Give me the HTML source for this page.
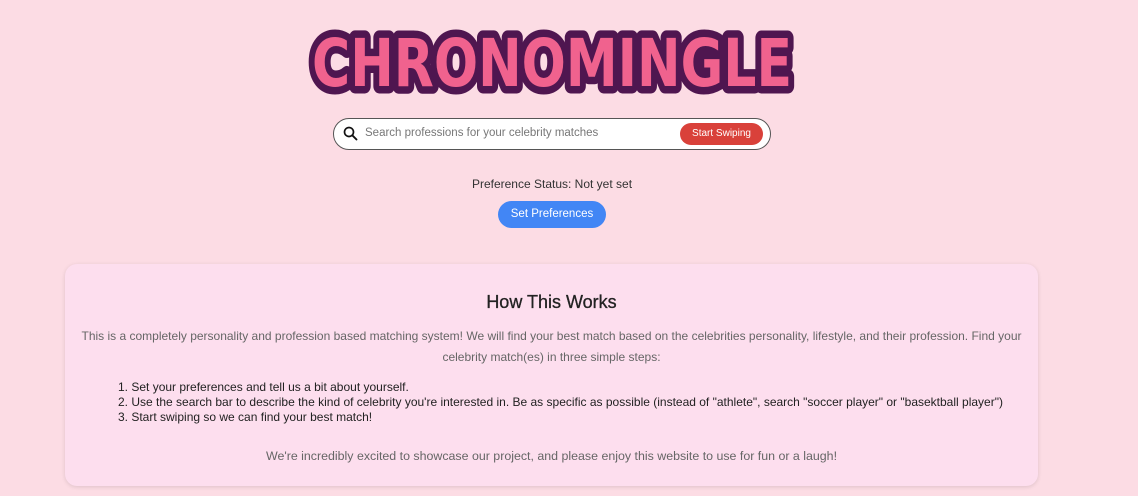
<!DOCTYPE html>
<html><head><meta charset="utf-8"><style>
body{margin:0;width:1138px;height:496px;background:#fcdce4;font-family:"Liberation Sans",sans-serif;position:relative;overflow:hidden}
.logo{position:absolute;left:295px;top:18px}
.search{position:absolute;left:333px;top:118px;width:438px;height:32px;border:1px solid #555;border-radius:17px;background:#fff;box-sizing:border-box}
.search .ph{position:absolute;left:31px;top:8px;font-size:11.5px;color:#777}
.search .btn{position:absolute;right:7px;top:4px;width:83px;height:22px;border-radius:11px;background:#d9413a;color:#fff;font-size:10px;text-align:center;line-height:22px}
.status{position:absolute;left:0;width:1104px;top:177px;text-align:center;font-size:12px;color:#333}
.pref{position:absolute;left:498px;top:201px;width:108px;height:27px;border-radius:14px;background:#4286f5;color:#fff;font-size:11.5px;text-align:center;line-height:27px}
.card{position:absolute;left:65px;top:264px;width:973px;height:222px;background:#fddeee;border-radius:12px;box-shadow:0 1px 4px rgba(0,0,0,.12)}
h2{position:absolute;top:28px;left:0;width:100%;margin:0;text-align:center;font-size:18px;font-weight:normal;color:#222;-webkit-text-stroke:.3px #222}
.p{position:absolute;top:62px;left:0;width:973px;text-align:center;font-size:12px;line-height:21px;color:#666;white-space:nowrap}
.ol{position:absolute;top:116px;left:53px;font-size:12px;line-height:15px;color:#222;white-space:nowrap}
.end{position:absolute;top:185px;left:0;width:100%;text-align:center;font-size:12.4px;color:#666}
</style></head><body>
<svg class="logo" width="515" height="82" viewBox="0 0 515 82">
<text x="257" y="68" text-anchor="middle" font-family="DejaVu Sans" font-weight="bold" font-size="66" textLength="480" lengthAdjust="spacingAndGlyphs" fill="#f0628e" stroke="#4f1650" stroke-width="15" stroke-linejoin="round" paint-order="stroke">CHRONOMINGLE</text>
</svg>
<div class="search">
<svg style="position:absolute;left:9px;top:7px" width="15" height="15" viewBox="0 0 15 15"><circle cx="6" cy="6" r="4.5" fill="none" stroke="#111" stroke-width="1.7"/><path d="M9.3 9.3 L13.5 13.5" stroke="#111" stroke-width="1.9" stroke-linecap="round"/></svg>
<div class="ph">Search professions for your celebrity matches</div>
<div class="btn">Start Swiping</div>
</div>
<div class="status">Preference Status: Not yet set</div>
<div class="pref">Set Preferences</div>
<div class="card">
<h2>How This Works</h2>
<div class="p">This is a completely personality and profession based matching system! We will find your best match based on the celebrities personality, lifestyle, and their profession. Find your<br>celebrity match(es) in three simple steps:</div>
<div class="ol">1. Set your preferences and tell us a bit about yourself.<br>2. Use the search bar to describe the kind of celebrity you're interested in. Be as specific as possible (instead of "athlete", search "soccer player" or "basektball player")<br>3. Start swiping so we can find your best match!</div>
<div class="end">We're incredibly excited to showcase our project, and please enjoy this website to use for fun or a laugh!</div>
</div>
</body></html>
